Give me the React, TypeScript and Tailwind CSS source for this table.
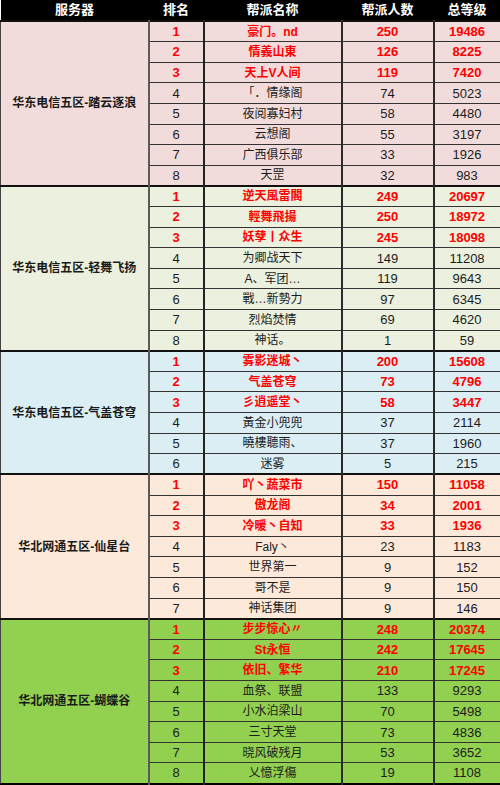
type Row = [string, number, number];

type Group = {
  server: string;
  bg: string;
  rows: Row[];
};

const groups: Group[] = [
  {
    server: "华东电信五区-踏云逐浪",
    bg: "bg-[#f2dcdb]",
    rows: [
      ["豪门。nd", 250, 19486],
      ["情義山東", 126, 8225],
      ["天上V人间", 119, 7420],
      ["「．情缘阁", 74, 5023],
      ["夜阅寡妇村", 58, 4480],
      ["云想阁", 55, 3197],
      ["广西俱乐部", 33, 1926],
      ["天罡", 32, 983],
    ],
  },
  {
    server: "华东电信五区-轻舞飞扬",
    bg: "bg-[#ebf1de]",
    rows: [
      ["逆天風雷閣", 249, 20697],
      ["輕舞飛揚", 250, 18972],
      ["妖孽丨众生", 245, 18098],
      ["为卿战天下", 149, 11208],
      ["A、军团…", 119, 9643],
      ["戰…新勢力", 97, 6345],
      ["烈焰焚情", 69, 4620],
      ["神话。", 1, 59],
    ],
  },
  {
    server: "华东电信五区-气盖苍穹",
    bg: "bg-[#dbeef4]",
    rows: [
      ["雾影迷城丶", 200, 15608],
      ["气盖苍穹", 73, 4796],
      ["彡逍遥堂丶", 58, 3447],
      ["黃金小兜兜", 37, 2114],
      ["曉樓聽雨、", 37, 1960],
      ["迷雾", 5, 215],
    ],
  },
  {
    server: "华北网通五区-仙星台",
    bg: "bg-[#fde9d9]",
    rows: [
      ["吖丶蔬菜市", 150, 11058],
      ["傲龙阁", 34, 2001],
      ["冷暖丶自知", 33, 1936],
      ["Faly丶", 23, 1183],
      ["世界第一", 9, 152],
      ["哥不是", 9, 150],
      ["神话集团", 9, 146],
    ],
  },
  {
    server: "华北网通五区-蝴蝶谷",
    bg: "bg-[#92d050]",
    rows: [
      ["步步惊心〃", 248, 20374],
      ["St永恒", 242, 17645],
      ["依旧、繁华", 210, 17245],
      ["血祭、联盟", 133, 9293],
      ["小水泊梁山", 70, 5498],
      ["三寸天堂", 73, 4836],
      ["晓风破残月", 53, 3652],
      ["乂憶浮傷", 19, 1108],
    ],
  },
];

const font = {
  fontFamily: '"Liberation Sans", "Noto Sans CJK SC", sans-serif',
};

export default function App() {
  return (
    <div className="w-[500px] h-[785px] bg-white overflow-hidden" style={font}>
      <table className="w-[500px] table-fixed border-collapse">
        <colgroup>
          <col className="w-[148px]" />
          <col className="w-[55px]" />
          <col className="w-[138px]" />
          <col className="w-[92px]" />
          <col className="w-[67px]" />
        </colgroup>
        <thead>
          <tr className="h-[21px] bg-black text-white text-[13px] font-bold">
            <th className="p-0 font-bold">服务器</th>
            <th className="p-0 font-bold">排名</th>
            <th className="p-0 font-bold">帮派名称</th>
            <th className="p-0 font-bold">帮派人数</th>
            <th className="p-0 font-bold">总等级</th>
          </tr>
        </thead>
        <tbody>
          {groups.map((g) =>
            g.rows.map((r, i) => {
              const top = i < 3;
              const txt = top
                ? "text-[#ff0000] font-bold"
                : "text-[#1c1c1c]";
              const edge =
                i === 0 ? "border-t-2 border-t-[#111]" : "border-t border-t-[#333]";
              return (
                <tr key={g.server + i} className={`h-[20.62px] ${g.bg}`}>
                  {i === 0 && (
                    <td
                      rowSpan={g.rows.length}
                      className="p-0 border-t-2 border-t-[#111] border-r-2 border-r-[#5a5a5a] border-l border-l-[#444] text-center align-middle text-[12px] font-bold text-[#1a1a1a]"
                    >
                      {g.server}
                    </td>
                  )}
                  <td
                    className={`p-0 ${edge} border-r-2 border-r-[#222] text-center align-middle text-[13px] leading-none ${txt}`}
                  >
                    {i + 1}
                  </td>
                  <td
                    className={`p-0 ${edge} border-r-2 border-r-[#2a2a2a] text-center align-middle text-[12px] leading-none whitespace-nowrap ${txt}`}
                  >
                    {r[0]}
                  </td>
                  <td
                    className={`p-0 ${edge} border-r-2 border-r-[#2a2a2a] text-center align-middle text-[13px] leading-none ${txt}`}
                  >
                    {r[1]}
                  </td>
                  <td
                    className={`p-0 ${edge} border-r-2 border-r-[#2a2a2a] text-center align-middle text-[13px] leading-none ${txt}`}
                  >
                    {r[2]}
                  </td>
                </tr>
              );
            })
          )}
          <tr className="h-0">
            <td colSpan={5} className="p-0 border-t-2 border-t-black" />
          </tr>
        </tbody>
      </table>
    </div>
  );
}
